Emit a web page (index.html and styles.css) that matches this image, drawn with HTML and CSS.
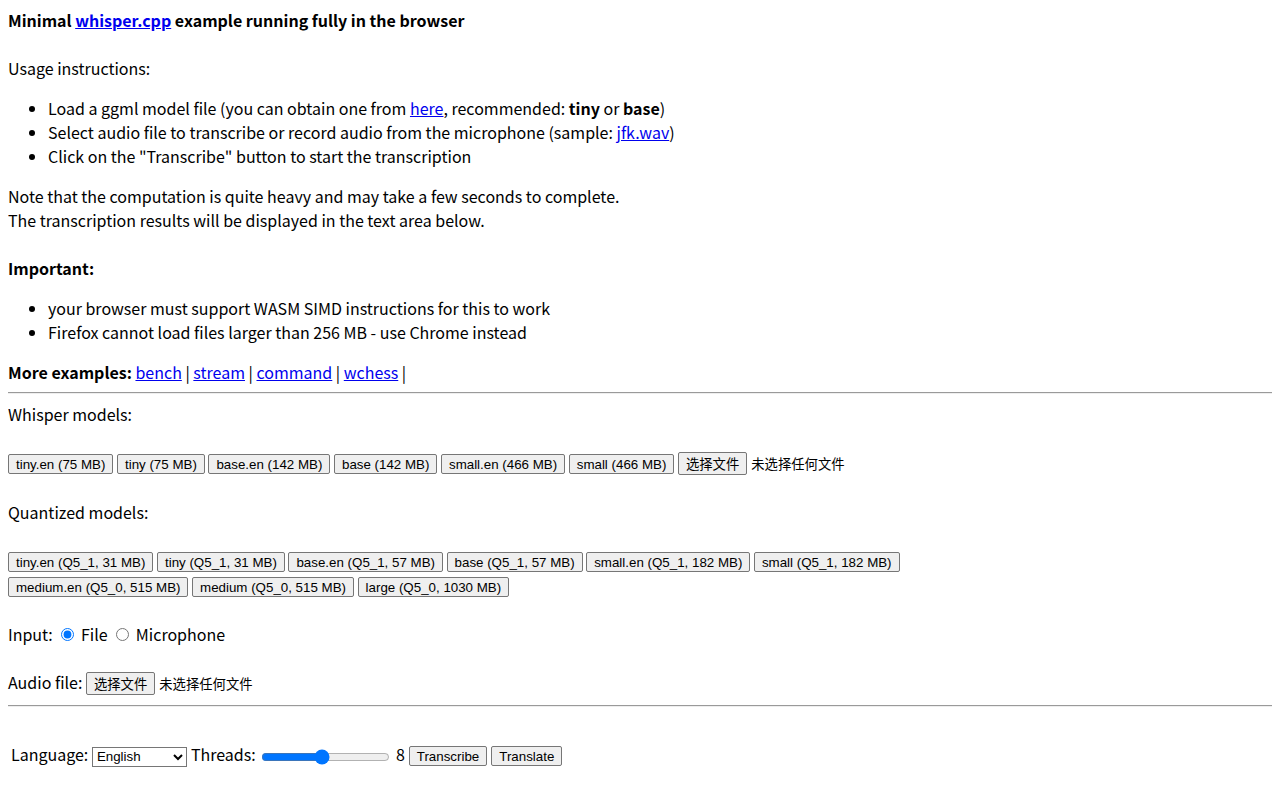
FILE: index.html
```html
<!DOCTYPE html>
<html lang="en">
<head>
<meta charset="utf-8">
<title>whisper.cpp : WASM example</title>
<link rel="stylesheet" href="styles.css">
</head>
<body>
<div id="main-container" class="main">
  <b>Minimal <a href="#">whisper.cpp</a> example running fully in the browser</b>
  <br><br>
  Usage instructions:<br>
  <ul>
    <li>Load a ggml model file (you can obtain one from <a href="#">here</a>, recommended: <b>tiny</b> or <b>base</b>)</li>
    <li>Select audio file to transcribe or record audio from the microphone (sample: <a href="#">jfk.wav</a>)</li>
    <li>Click on the "Transcribe" button to start the transcription</li>
  </ul>
  Note that the computation is quite heavy and may take a few seconds to complete.<br>
  The transcription results will be displayed in the text area below.<br><br>
  <b>Important:</b>
  <ul>
    <li>your browser must support WASM SIMD instructions for this to work</li>
    <li>Firefox cannot load files larger than 256 MB - use Chrome instead</li>
  </ul>
  <b>More examples:</b>
  <a href="#">bench</a> |
  <a href="#">stream</a> |
  <a href="#">command</a> |
  <a href="#">wchess</a> |
  <hr class="rule">
  <div id="model">
    Whisper models: <span></span>
    <br><br>
    <button class="btn">tiny.en (75 MB)</button>
    <button class="btn">tiny (75 MB)</button>
    <button class="btn">base.en (142 MB)</button>
    <button class="btn">base (142 MB)</button>
    <button class="btn">small.en (466 MB)</button>
    <button class="btn">small (466 MB)</button>
    <span class="file"><button class="btn file-btn">选择文件</button><span class="file-name">未选择任何文件</span></span>
    <br><br>
    Quantized models:<br><br>
    <span class="quant">
    <button class="btn">tiny.en (Q5_1, 31 MB)</button>
    <button class="btn">tiny (Q5_1, 31 MB)</button>
    <button class="btn">base.en (Q5_1, 57 MB)</button>
    <button class="btn">base (Q5_1, 57 MB)</button>
    <button class="btn">small.en (Q5_1, 182 MB)</button>
    <button class="btn">small (Q5_1, 182 MB)</button><br>
    <button class="btn">medium.en (Q5_0, 515 MB)</button>
    <button class="btn">medium (Q5_0, 515 MB)</button>
    <button class="btn">large (Q5_0, 1030 MB)</button>
    </span>
  </div>
  <br>
  <div id="input">
    Input:
    <input type="radio" id="file" name="input" value="file" checked>
    <label for="file">File</label>
    <input type="radio" id="mic" name="input" value="mic">
    <label for="mic">Microphone</label>
  </div>
  <br>
  <div id="input_file">
    Audio file:
    <span class="file"><button class="btn file-btn">选择文件</button><span class="file-name">未选择任何文件</span></span>
  </div>
  <hr class="rule rule-lower">
  <table class="controls">
    <tr>
      <td>
        Language:
        <select id="language" class="select">
          <option value="en" selected>English</option>
          <option value="zh">Chinese</option>
          <option value="de">German</option>
        </select>
      </td>
      <td>
        Threads: <input type="range" class="range" min="1" max="16" value="8">
        <output class="out">8</output>
      </td>
      <td><button class="btn">Transcribe</button></td>
      <td><button class="btn">Translate</button></td>
    </tr>
  </table>
</div>
</body>
</html>
```

FILE: styles.css
```css
html {
  background: #ffffff;
}
body {
  margin: 8px;
  font-family: "Noto Sans CJK SC", "Noto Sans", sans-serif;
  font-size: 16px;
  line-height: 24px;
  color: #000000;
}
a {
  color: #0000ee;
  text-decoration: underline;
}
ul {
  margin: 16px 0;
  padding-left: 40px;
}
.rule {
  margin: 8px 0;
  border: none;
  border-top: 1px solid #9a9a9a;
  border-bottom: 1px solid #eeeeee;
  height: 0;
}
.rule-lower {
  margin-top: 9px;
}
.quant {
  line-height: 25px;
}
.btn {
  font-family: "Liberation Sans", Arial, sans-serif;
  font-size: 13.333px;
  line-height: normal;
  padding: 2px 7px 1px;
  margin: 0;
  color: #000000;
  background: #efefef;
  border: 1px solid #767676;
  border-radius: 2px;
}
.file {
  white-space: nowrap;
}
.file-btn {
  font-family: "Noto Sans CJK SC", sans-serif;
  font-size: 13.333px;
  padding: 1px 7px;
  margin-right: 4px;
}
.file-name {
  font-family: "Noto Sans CJK SC", sans-serif;
  font-size: 13.333px;
}
input[type="radio"] {
  margin: 3px 3px 0 5px;
  width: 13px;
  height: 13px;
  accent-color: #0075ff;
}
.controls {
  border-spacing: 2px;
  margin-top: 32px;
}
.controls td {
  padding: 1px;
}
.select {
  font-family: "Liberation Sans", Arial, sans-serif;
  font-size: 13.333px;
  width: 95px;
  height: 20px;
  padding: 0;
  border: 1px solid #767676;
  border-radius: 0;
  background: #ffffff;
  color: #000;
}
.range {
  width: 129px;
  margin: 2px;
  accent-color: #0075ff;
  vertical-align: middle;
}
.out {
  font-size: 16px;
}
```
